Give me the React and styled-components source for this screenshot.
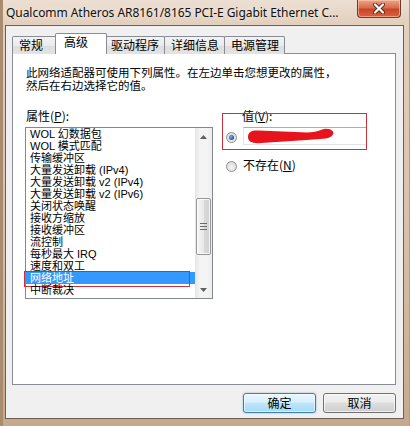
import React from "react";
import styled, { createGlobalStyle, css } from "styled-components";

const CJK = `"Noto Sans CJK SC", "Noto Sans", sans-serif`;
const TIGHT_FONT = `"Liberation Sans", "Noto Sans CJK SC", sans-serif`;

const GlobalStyle = createGlobalStyle`
  html, body { margin: 0; padding: 0; }
  body {
    width: 410px;
    height: 426px;
    overflow: hidden;
    background: #d8c2ab;
    font-family: ${CJK};
  }
`;

const Window = styled.div`
  width: 410px;
  height: 426px;
  box-sizing: border-box;
  display: flex;
  flex-direction: column;
  padding: 0 6px 7px 5px;
  background: linear-gradient(180deg, #ecdfd2 0px, #e2cfbd 24px, #d7c0a9 55%, #c5a98e 100%);
  box-shadow: inset 3px 0 0 #a98b70, inset -1px 0 0 #b89c82;
`;

const TitleBar = styled.div`
  height: 25px;
  display: flex;
  justify-content: space-between;
  align-items: flex-start;
`;

const Title = styled.div`
  padding: 5px 0 0 1px;
  font-family: "Noto Sans", sans-serif;
  font-size: 12px;
  line-height: 16px;
  color: #111;
  letter-spacing: -0.05px;
  white-space: nowrap;
  text-shadow: 0 0 6px rgba(255, 255, 255, 0.9);
`;

const CloseButton = styled.div`
  width: 44px;
  height: 18px;
  margin-right: 3px;
  box-sizing: border-box;
  border: 1px solid #6d3b2c;
  border-top: none;
  border-radius: 0 0 4px 4px;
  background: linear-gradient(180deg, #eba588 0%, #d96c4b 45%, #c8442a 55%, #dc6240 100%);
  box-shadow: inset 0 0 0 1px rgba(255, 210, 190, 0.55);
  display: flex;
  align-items: center;
  justify-content: center;
`;

const Client = styled.div`
  flex: 1;
  display: flex;
  flex-direction: column;
  background: #f0f0f0;
  border: 1px solid #6f5d4e;
  padding: 7px 7px 0 6px;
`;

const TabStrip = styled.div`
  display: flex;
  align-items: flex-start;
  height: 21px;
  padding-left: 1px;
  position: relative;
  z-index: 1;
`;

const Tab = styled.div`
  box-sizing: border-box;
  min-width: 46px;
  height: 18px;
  margin-top: 3px;
  margin-left: -1px;
  padding: 0 5px 0 6px;
  border: 1px solid #898c95;
  border-bottom: none;
  border-radius: 2px 2px 0 0;
  background: linear-gradient(180deg, #f3f3f3 0%, #ebebeb 50%, #dddddd 51%, #e3e3e3 100%);
  font-size: 12px;
  line-height: 16px;
  color: #000;
  white-space: nowrap;
  ${(p) =>
    p.$active &&
    css`
      position: relative;
      height: 21px;
      margin-top: 0;
      margin-left: -3px;
      margin-right: -2px;
      min-width: 52px;
      padding: 0 7px 0 8px;
      background: #ffffff;
      line-height: 15px;
    `}
`;

const Panel = styled.div`
  flex: 1;
  margin-top: -1px;
  background: #ffffff;
  border: 1px solid #898c95;
  padding: 13px 13px 0 13px;
`;

const Description = styled.div`
  font-family: ${TIGHT_FONT};
  font-size: 11.5px;
  line-height: 13px;
  color: #000;
  white-space: nowrap;
`;

const Columns = styled.div`
  display: grid;
  grid-template-columns: 188px 1fr;
  column-gap: 12px;
  margin-top: 16px;
`;

const LeftCol = styled.div`
  display: flex;
  flex-direction: column;
`;

const RightCol = styled.div`
  position: relative;
  display: flex;
  flex-direction: column;
`;

const Label = styled.div`
  font-size: 12px;
  line-height: 14px;
  color: #000;
  padding-left: ${(p) => p.$indent || 0}px;
  u { text-decoration: underline; }
`;

const ListBox = styled.div`
  margin-top: 4px;
  margin-left: -1px;
  width: 188px;
  height: 172px;
  box-sizing: border-box;
  border: 1px solid #828790;
  display: flex;
  background: #fff;
`;

const Items = styled.div`
  flex: 1;
  display: flex;
  flex-direction: column;
`;

const Item = styled.div`
  position: relative;
  height: 12px;
  line-height: 12px;
  font-family: ${TIGHT_FONT};
  font-size: 11px;
  padding-left: 4px;
  white-space: nowrap;
  color: #000;
  ${(p) =>
    p.$selected &&
    css`
      background: #3399ff;
      color: #fff;
    `}
`;

const Annotation = styled.div`
  position: absolute;
  border: 1px solid #c8323c;
  pointer-events: none;
  left: ${(p) => p.$left}px;
  top: ${(p) => p.$top}px;
  width: ${(p) => p.$width}px;
  height: ${(p) => p.$height}px;
  box-sizing: border-box;
`;

const Scrollbar = styled.div`
  width: 17px;
  display: flex;
  flex-direction: column;
  background: linear-gradient(90deg, #e6e6e6 0%, #f4f4f4 30%, #f4f4f4 70%, #ececec 100%);
`;

const ArrowButton = styled.div`
  height: 17px;
  display: flex;
  align-items: center;
  justify-content: center;
`;

const Track = styled.div`
  flex: 1;
  display: flex;
  flex-direction: column;
  padding-top: ${(p) => p.$offset}px;
`;

const Thumb = styled.div`
  height: ${(p) => p.$size}px;
  margin: 0 0 0 1px;
  width: 15px;
  box-sizing: border-box;
  border: 1px solid #979797;
  border-radius: 2px;
  background: linear-gradient(90deg, #f5f5f5 0%, #e9e9e9 50%, #d9d9d9 51%, #d2d2d2 100%);
  box-shadow: inset 0 0 0 1px rgba(255, 255, 255, 0.8);
  display: flex;
  align-items: center;
  justify-content: center;
`;

const ValueRow = styled.div`
  margin-top: 4px;
  height: 18px;
  display: flex;
  align-items: center;
`;

const OptionRow = styled.div`
  margin-top: 12px;
  height: 16px;
  display: flex;
  align-items: center;
  font-size: 12px;
  line-height: 16px;
  color: #000;
`;

const Radio = styled.span`
  width: 11px;
  height: 11px;
  margin-right: 6px;
  margin-top: 3px;
  flex: none;
  box-sizing: border-box;
  border-radius: 50%;
  border: 1px solid #8f9296;
  background: radial-gradient(circle at 50% 60%, #f6f6f6 0%, #e0e0e0 60%, #cfcfcf 100%);
  display: flex;
  align-items: center;
  justify-content: center;
  &::after {
    content: "";
    display: ${(p) => (p.$checked ? "block" : "none")};
    width: 5px;
    height: 5px;
    border-radius: 50%;
    background: radial-gradient(circle at 40% 40%, #7cb6ec 0%, #2a5d9c 60%, #17386a 100%);
  }
`;

const TextBox = styled.div`
  width: 124px;
  height: 18px;
  box-sizing: border-box;
  border: 1px solid #e2e3ea;
  border-top-color: #abadb3;
  background: #fff;
  display: flex;
  align-items: center;
  padding-left: 3px;
`;

const ButtonRow = styled.div`
  display: flex;
  justify-content: flex-end;
  gap: 7px;
  margin: 8px 0 5px;
`;

const Button = styled.div`
  width: 73px;
  height: 20px;
  box-sizing: border-box;
  border: 1px solid #707070;
  border-radius: 3px;
  background: linear-gradient(180deg, #f2f2f2 0%, #ebebeb 45%, #dddddd 50%, #cfcfcf 100%);
  box-shadow: inset 0 0 0 1px rgba(255, 255, 255, 0.7);
  font-size: 12px;
  line-height: 18px;
  text-align: center;
  color: #000;
  ${(p) =>
    p.$primary &&
    css`
      border-color: #3c7fb1;
      background: linear-gradient(180deg, #eaf6fd 0%, #d9f0fc 45%, #bee6fd 50%, #a7d9f5 100%);
      box-shadow: inset 0 0 0 1px rgba(255, 255, 255, 0.6), 0 0 2px rgba(60, 127, 177, 0.6);
    `}
`;

const ITEMS = [
  "WOL 幻数据包",
  "WOL 模式匹配",
  "传输缓冲区",
  "大量发送卸载 (IPv4)",
  "大量发送卸载 v2 (IPv4)",
  "大量发送卸载 v2 (IPv6)",
  "关闭状态唤醒",
  "接收方缩放",
  "接收缓冲区",
  "流控制",
  "每秒最大 IRQ",
  "速度和双工",
  "网络地址",
  "中断裁决",
];

const TABS = ["常规", "高级", "驱动程序", "详细信息", "电源管理"];

function CloseIcon() {
  return (
    <svg width="12" height="11" viewBox="0 0 12 11">
      <path d="M2 1.5 L10 9.5 M10 1.5 L2 9.5" stroke="#5a2a1e" strokeWidth="4" strokeLinecap="round" />
      <path d="M2 1.5 L10 9.5 M10 1.5 L2 9.5" stroke="#ffffff" strokeWidth="2.2" strokeLinecap="round" />
    </svg>
  );
}

function Arrow({ down }) {
  return (
    <svg width="7" height="4" viewBox="0 0 7 4">
      <path d={down ? "M0 0 L7 0 L3.5 4 Z" : "M0 4 L7 4 L3.5 0 Z"} fill="#5f5f5f" />
    </svg>
  );
}

function Grip() {
  return (
    <svg width="7" height="7" viewBox="0 0 7 7">
      <path d="M0 0.5 H7 M0 3.5 H7 M0 6.5 H7" stroke="#6a6a6a" strokeWidth="1" />
    </svg>
  );
}

function Scribble() {
  return (
    <svg width="88" height="16" viewBox="0 0 88 16">
      <path
        d="M1 9 C1 3 6 2 12 2.5 L60 4.5 C66 4.5 70 3.5 74 2 C78 0.3 83 0.3 86 3.5 C87.5 6.5 84 9.5 79 10.5 C70 11.5 62 11.5 52 12.5 L14 15 C6 15.8 1 14 1 9 Z"
        fill="#e8141c"
      />
    </svg>
  );
}

export default function App() {
  const selected = 12;
  return (
    <>
      <GlobalStyle />
      <Window>
        <TitleBar>
          <Title>Qualcomm Atheros AR8161/8165 PCI-E Gigabit Ethernet C...</Title>
          <CloseButton>
            <CloseIcon />
          </CloseButton>
        </TitleBar>
        <Client>
          <TabStrip>
            {TABS.map((t) => (
              <Tab key={t} $active={t === "高级"}>
                {t}
              </Tab>
            ))}
          </TabStrip>
          <Panel>
            <Description>
              此网络适配器可使用下列属性。在左边单击您想更改的属性，
              <br />
              然后在右边选择它的值。
            </Description>
            <Columns>
              <LeftCol>
                <Label>
                  属性(<u>P</u>):
                </Label>
                <ListBox>
                  <Items>
                    {ITEMS.map((it, i) => (
                      <Item key={it} $selected={i === selected}>
                        {it}
                        {i === selected && <Annotation $left={-2} $top={-1} $width={166} $height={16} />}
                      </Item>
                    ))}
                  </Items>
                  <Scrollbar>
                    <ArrowButton>
                      <Arrow />
                    </ArrowButton>
                    <Track $offset={53}>
                      <Thumb $size={57}>
                        <Grip />
                      </Thumb>
                    </Track>
                    <ArrowButton>
                      <Arrow down />
                    </ArrowButton>
                  </Scrollbar>
                </ListBox>
              </LeftCol>
              <RightCol>
                <Label $indent={16}>
                  值(<u>V</u>):
                </Label>
                <ValueRow>
                  <Radio $checked />
                  <TextBox>
                    <Scribble />
                  </TextBox>
                </ValueRow>
                <OptionRow>
                  <Radio />
                  不存在(<u>N</u>)
                </OptionRow>
                <Annotation $left={-4} $top={4} $width={145} $height={37} />
              </RightCol>
            </Columns>
          </Panel>
          <ButtonRow>
            <Button $primary>确定</Button>
            <Button>取消</Button>
          </ButtonRow>
        </Client>
      </Window>
    </>
  );
}
